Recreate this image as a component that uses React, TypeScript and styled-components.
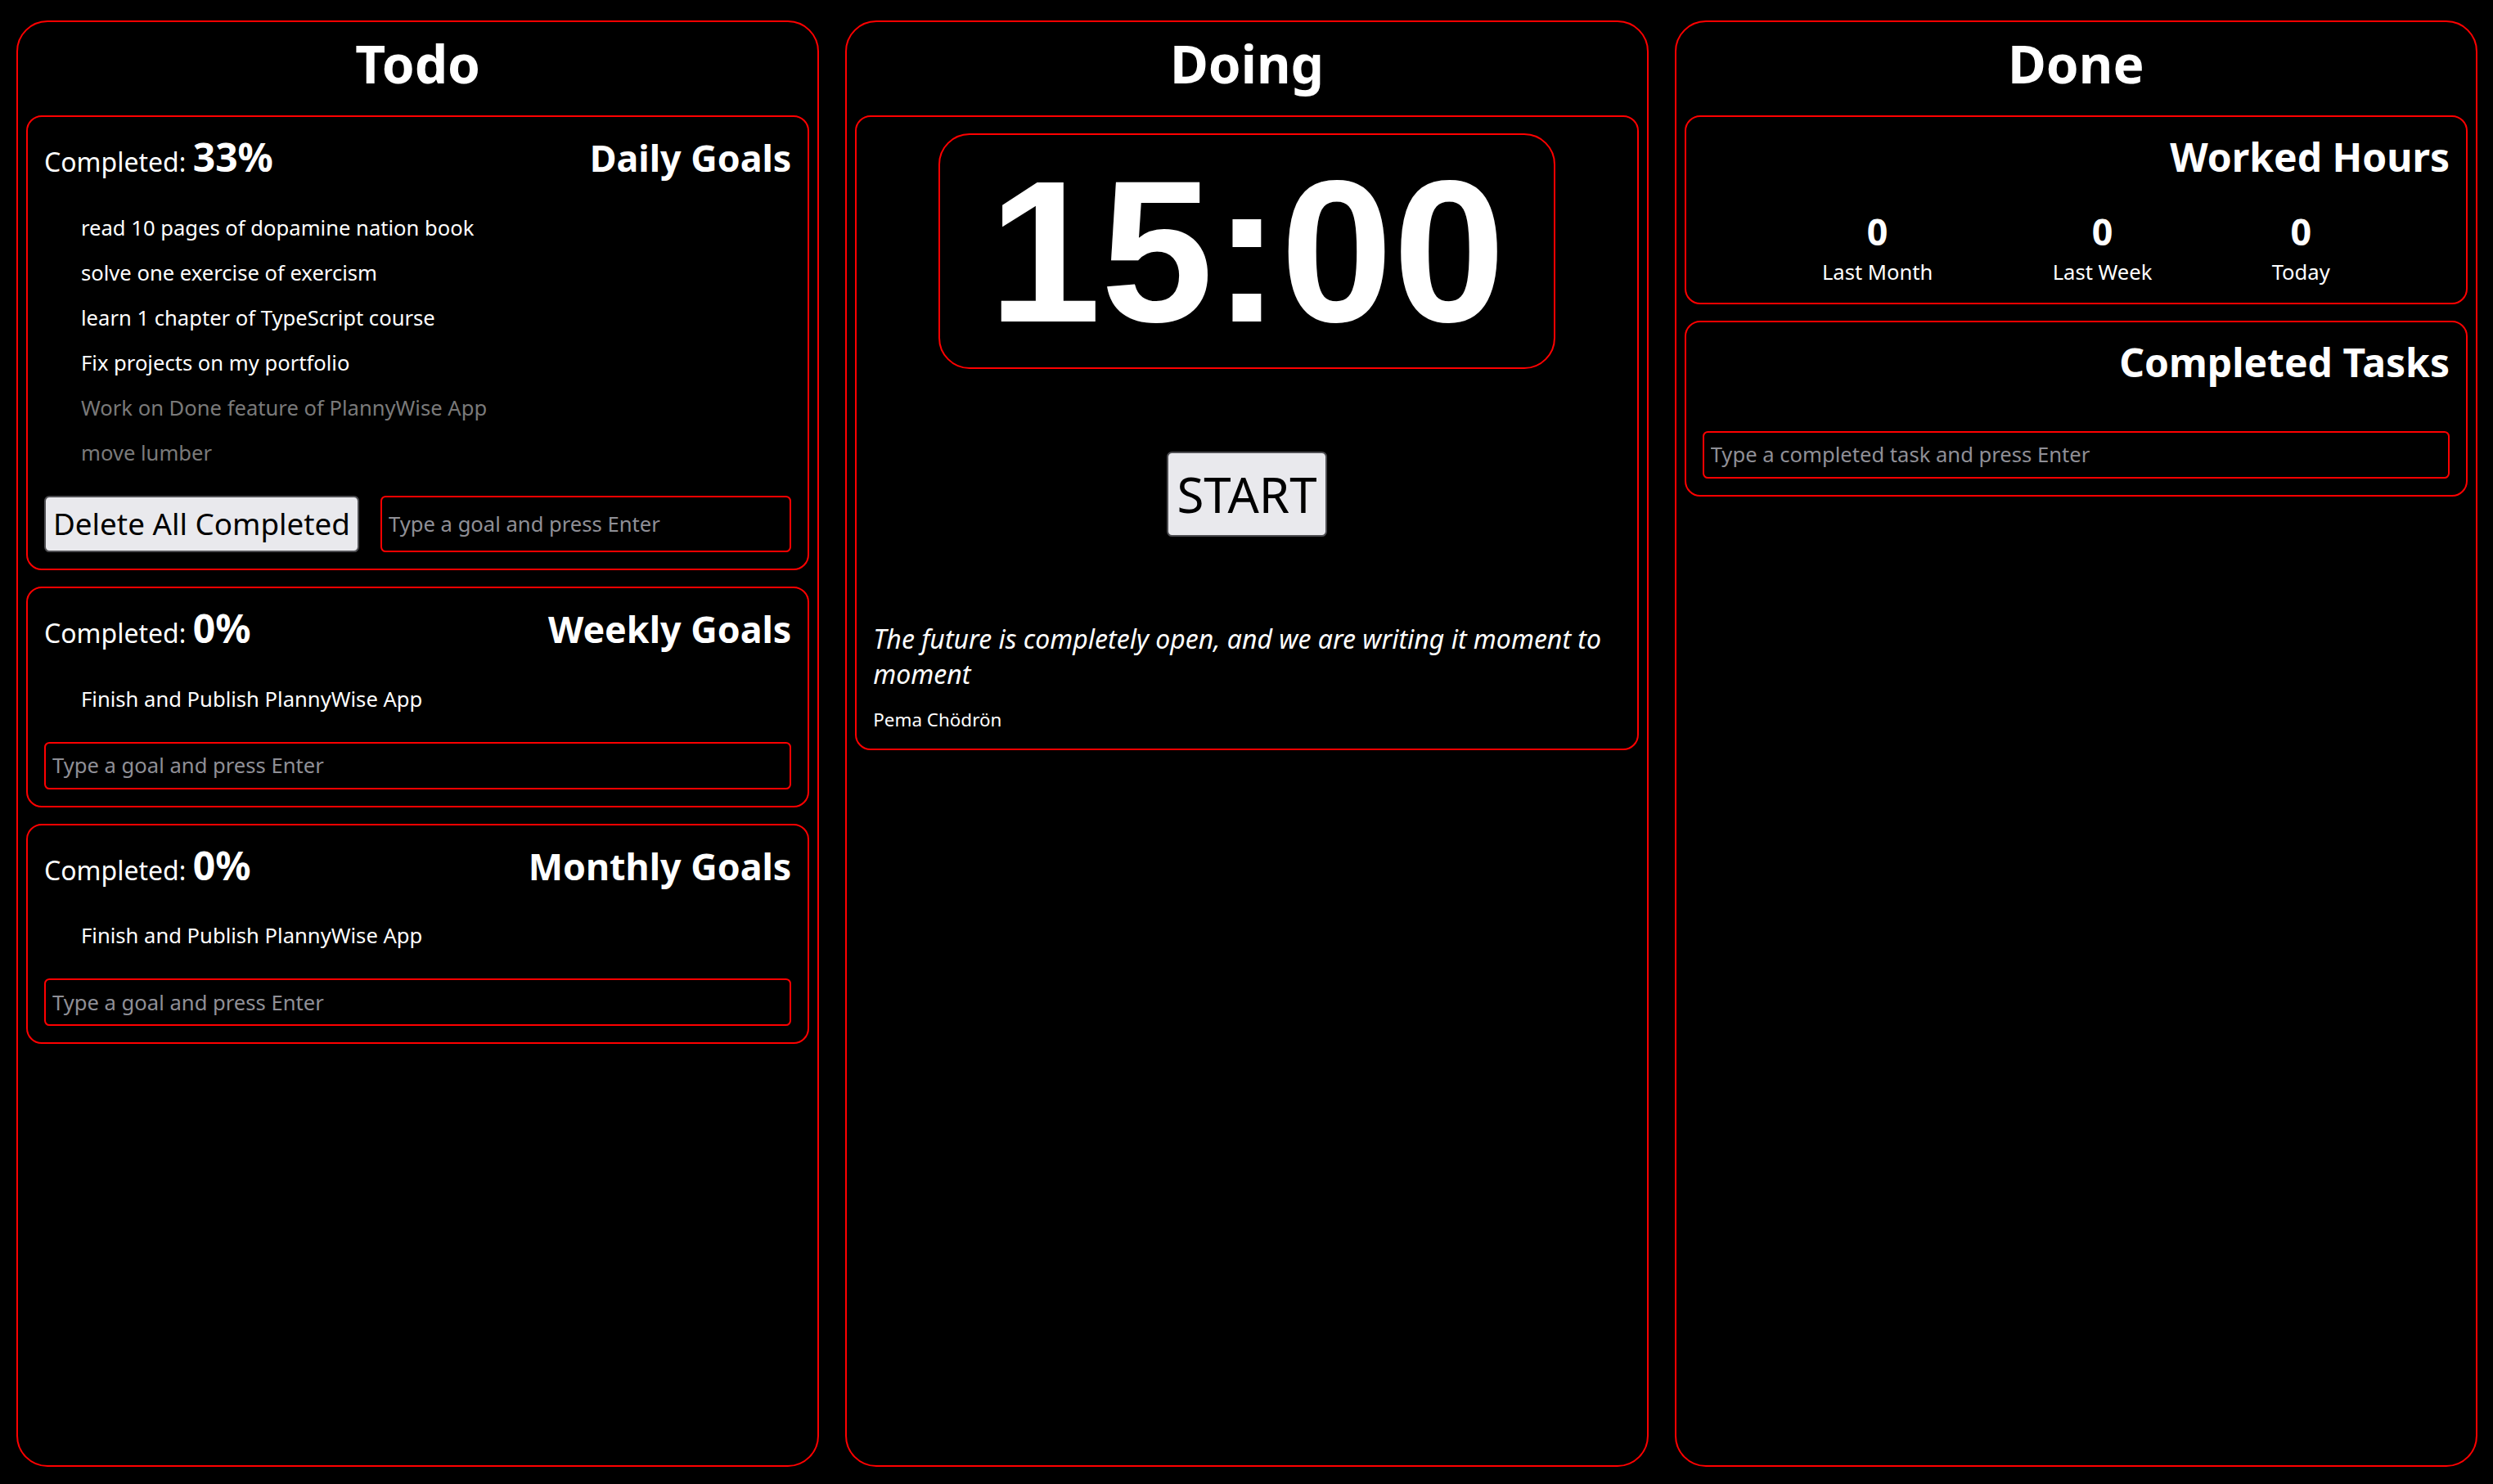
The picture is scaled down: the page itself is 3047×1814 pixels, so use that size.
import React from "react";
import styled, { createGlobalStyle } from "styled-components";

const GlobalStyle = createGlobalStyle`
  html, body {
    margin: 0;
    padding: 0;
    background: #000;
    color: #fff;
    font-family: "Noto Sans", "DejaVu Sans", sans-serif;
  }
  * { box-sizing: border-box; }
`;

const Board = styled.main`
  display: grid;
  grid-template-columns: repeat(3, 1fr);
  gap: 32px;
  height: 100vh;
  padding: 25px 19px 21px 20px;
  background: #000;
`;

const Column = styled.section`
  display: flex;
  flex-direction: column;
  gap: 20px;
  min-height: 0;
  border: 2px solid #ff0000;
  border-radius: 38px;
  padding: 7.4px 10px;
`;

const ColumnTitle = styled.h1`
  margin: 0;
  text-align: center;
  font-size: 64px;
  font-weight: 700;
  line-height: normal;
  color: #fff;
`;

const Card = styled.div`
  display: flex;
  flex-direction: column;
  border: 2px solid #ff0000;
  border-radius: 19px;
  padding: 20px;
`;

const CardHeader = styled.div<{ $end?: boolean }>`
  display: flex;
  align-items: baseline;
  justify-content: ${(p) => (p.$end ? "flex-end" : "space-between")};
  line-height: 1.2;
`;

const CompletedLabel = styled.span`
  font-size: 32px;
`;

const Percent = styled.strong`
  font-size: 48px;
  font-weight: 700;
`;

const CardTitle = styled.h2<{ $large?: boolean }>`
  margin: 0;
  font-size: ${(p) => (p.$large ? "48px" : "44.8px")};
  font-weight: 700;
`;

const GoalList = styled.ul`
  list-style: none;
  margin: 30px 0 25px;
  padding: 0 0 0 45px;
`;

const GoalItem = styled.li<{ $done?: boolean }>`
  font-size: 25.6px;
  line-height: normal;
  padding: 10px 0;
  color: ${(p) => (p.$done ? "#7a7a7a" : "#fff")};
`;

const Controls = styled.div`
  display: flex;
  gap: 26px;
`;

const GrayButton = styled.button<{ $big?: boolean }>`
  font-family: "Noto Sans", "DejaVu Sans", sans-serif;
  font-size: ${(p) => (p.$big ? "60px" : "36.8px")};
  line-height: normal;
  color: #000;
  background: #e9e9ed;
  border: 2px solid #4e4e52;
  border-radius: 6.4px;
  padding: ${(p) => (p.$big ? "9px 10px" : "7.5px 9px")};
  white-space: nowrap;
  cursor: pointer;
`;

const TextInput = styled.input`
  flex: 1;
  width: 100%;
  min-width: 0;
  font-family: "Noto Sans", "DejaVu Sans", sans-serif;
  font-size: 25.6px;
  line-height: normal;
  color: #fff;
  background: #000;
  border: 2px solid #ff0000;
  border-radius: 6.4px;
  padding: 9.5px 8px;
  outline: none;
  &::placeholder {
    color: #8f8f96;
    opacity: 1;
  }
`;

const TimerBox = styled.div`
  align-self: center;
  font-family: "Liberation Sans", Arial, sans-serif;
  font-size: 247px;
  font-weight: 700;
  line-height: normal;
  color: #fff;
  border: 2px solid #ff0000;
  border-radius: 38px;
  padding: 0 59px;
`;

const StartWrap = styled.div`
  display: flex;
  justify-content: center;
  margin: 101px 0 103px;
`;

const Quote = styled.p`
  margin: 0;
  font-size: 32px;
  font-style: italic;
  line-height: normal;
`;

const Author = styled.p`
  margin: 19px 0 0;
  font-size: 22.4px;
  line-height: normal;
`;

const StatsRow = styled.div`
  display: flex;
  justify-content: space-evenly;
  margin-top: 31px;
`;

const Stat = styled.div`
  display: flex;
  flex-direction: column;
  align-items: center;
  gap: 2px;
`;

const StatValue = styled.span`
  font-size: 44.8px;
  font-weight: 700;
  line-height: normal;
`;

const StatLabel = styled.span`
  font-size: 25.6px;
  line-height: normal;
`;

type Goal = { text: string; done?: boolean };

const daily: Goal[] = [
  { text: "read 10 pages of dopamine nation book" },
  { text: "solve one exercise of exercism" },
  { text: "learn 1 chapter of TypeScript course" },
  { text: "Fix projects on my portfolio" },
  { text: "Work on Done feature of PlannyWise App", done: true },
  { text: "move lumber", done: true },
];

const GoalCard: React.FC<{
  title: string;
  percent: string;
  goals: Goal[];
  withDelete?: boolean;
}> = ({ title, percent, goals, withDelete }) => (
  <Card>
    <CardHeader>
      <CompletedLabel>
        Completed: <Percent>{percent}</Percent>
      </CompletedLabel>
      <CardTitle>{title}</CardTitle>
    </CardHeader>
    <GoalList>
      {goals.map((g) => (
        <GoalItem key={g.text} $done={g.done}>
          {g.text}
        </GoalItem>
      ))}
    </GoalList>
    <Controls>
      {withDelete && <GrayButton>Delete All Completed</GrayButton>}
      <TextInput placeholder="Type a goal and press Enter" />
    </Controls>
  </Card>
);

export default function App() {
  return (
    <>
      <GlobalStyle />
      <Board>
        <Column>
          <ColumnTitle>Todo</ColumnTitle>
          <GoalCard title="Daily Goals" percent="33%" goals={daily} withDelete />
          <GoalCard
            title="Weekly Goals"
            percent="0%"
            goals={[{ text: "Finish and Publish PlannyWise App" }]}
          />
          <GoalCard
            title="Monthly Goals"
            percent="0%"
            goals={[{ text: "Finish and Publish PlannyWise App" }]}
          />
        </Column>
        <Column>
          <ColumnTitle>Doing</ColumnTitle>
          <Card>
            <TimerBox>15:00</TimerBox>
            <StartWrap>
              <GrayButton $big>START</GrayButton>
            </StartWrap>
            <Quote>
              The future is completely open, and we are writing it moment to moment
            </Quote>
            <Author>Pema Chödrön</Author>
          </Card>
        </Column>
        <Column>
          <ColumnTitle>Done</ColumnTitle>
          <Card>
            <CardHeader $end>
              <CardTitle $large>Worked Hours</CardTitle>
            </CardHeader>
            <StatsRow>
              <Stat>
                <StatValue>0</StatValue>
                <StatLabel>Last Month</StatLabel>
              </Stat>
              <Stat>
                <StatValue>0</StatValue>
                <StatLabel>Last Week</StatLabel>
              </Stat>
              <Stat>
                <StatValue>0</StatValue>
                <StatLabel>Today</StatLabel>
              </Stat>
            </StatsRow>
          </Card>
          <Card>
            <CardHeader $end>
              <CardTitle $large>Completed Tasks</CardTitle>
            </CardHeader>
            <GoalList />
            <Controls>
              <TextInput placeholder="Type a completed task and press Enter" />
            </Controls>
          </Card>
        </Column>
      </Board>
    </>
  );
}
